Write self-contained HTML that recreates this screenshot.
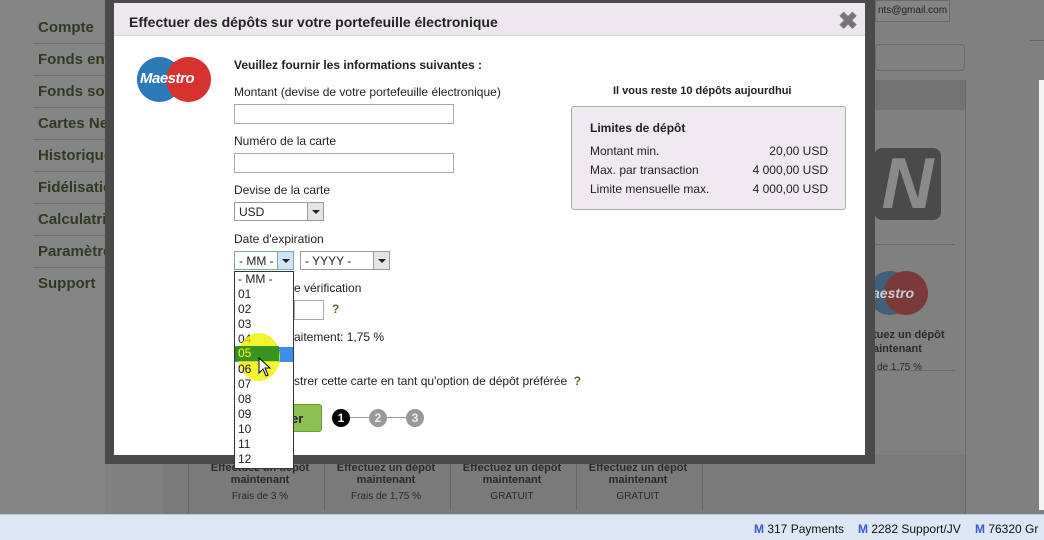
<!DOCTYPE html>
<html><head><meta charset="utf-8"><style>
*{margin:0;padding:0;box-sizing:border-box}
body{width:1044px;height:540px;overflow:hidden;background:#808080;font-family:"Liberation Sans",Arial,sans-serif;position:relative;color:#222}
.abs{position:absolute}
.nav{left:38px;font-weight:bold;font-size:15px;color:#2e3b22;}
.navl{left:33px;width:80px;height:1px;background:#6e6e6e}
.frame{left:105px;top:0;width:770px;height:464px;background:#4a4a4a;}
.modal{left:114px;top:3px;width:751px;height:452px;background:#fff}
.hdr{left:0;top:0;width:751px;height:33px;background:#ede8ee;border-bottom:1px solid #d8d4da;font-size:14px;font-weight:bold;padding:11px 15px;color:#222}
.lbl{font-size:12px;color:#222}
.inp{border:1px solid #aaa;background:#fff;height:20px}
.sel{border:1px solid #999;background:#fff;height:19px;font-size:12px;padding:2px 4px}
.arr{position:absolute;right:0;top:0;width:16px;height:17px;background:#e4e4e4;border-left:1px solid #999}
.arr:after{content:"";position:absolute;left:4px;top:7px;border:4px solid transparent;border-top:4px solid #222;border-bottom:0}
.dd{left:234px;top:271px;width:60px;height:198px;background:#fff;border:1px solid #333;font-size:12px}
.dd div{height:15px;line-height:15px;padding-left:3px}
.card{font-size:11px;color:#2a2a2a;text-align:center;font-weight:bold;width:110px}
</style></head><body>
<div class="abs" style="left:0;top:0;width:105px;height:514px;background:#858585"></div>
<div class="abs nav" style="top:19px">Compte</div><div class="abs navl" style="top:43px"></div>
<div class="abs nav" style="top:51px">Fonds ent</div><div class="abs navl" style="top:75px"></div>
<div class="abs nav" style="top:83px">Fonds sor</div><div class="abs navl" style="top:107px"></div>
<div class="abs nav" style="top:115px">Cartes Ne</div><div class="abs navl" style="top:139px"></div>
<div class="abs nav" style="top:147px">Historique</div><div class="abs navl" style="top:171px"></div>
<div class="abs nav" style="top:179px">Fidélisatio</div><div class="abs navl" style="top:203px"></div>
<div class="abs nav" style="top:211px">Calculatri</div><div class="abs navl" style="top:235px"></div>
<div class="abs nav" style="top:243px">Paramètre</div><div class="abs navl" style="top:267px"></div>
<div class="abs nav" style="top:275px">Support</div>
<div class="abs" style="left:163px;top:455px;width:802px;height:59px;background:#7a7a7a"></div>
<div class="abs" style="left:188px;top:455px;width:1px;height:59px;background:#666"></div>
<div class="abs" style="left:324px;top:462px;width:1px;height:48px;background:#666"></div>
<div class="abs" style="left:450px;top:462px;width:1px;height:48px;background:#666"></div>
<div class="abs" style="left:576px;top:462px;width:1px;height:48px;background:#666"></div>
<div class="abs" style="left:702px;top:462px;width:1px;height:48px;background:#666"></div>
<div class="abs card" style="left:205px;top:462px">Effectuez un dépôt<br>maintenant<br><span style="font-weight:normal;font-size:10px;line-height:22px">Frais de 3 %</span></div>
<div class="abs card" style="left:331px;top:462px">Effectuez un dépôt<br>maintenant<br><span style="font-weight:normal;font-size:10px;line-height:22px">Frais de 1,75 %</span></div>
<div class="abs card" style="left:457px;top:462px">Effectuez un dépôt<br>maintenant<br><span style="font-weight:normal;font-size:10px;line-height:22px">GRATUIT</span></div>
<div class="abs card" style="left:583px;top:462px">Effectuez un dépôt<br>maintenant<br><span style="font-weight:normal;font-size:10px;line-height:22px">GRATUIT</span></div>
<div class="abs" style="left:875px;top:0;width:75px;height:22px;border:1px solid #6a6a6a;font-size:10px;color:#222;padding:4px 2px;background:#848484">nts@gmail.com</div>
<div class="abs" style="left:875px;top:44px;width:90px;height:27px;border:1px solid #6a6a6a;border-radius:4px"></div>
<div class="abs" style="left:875px;top:80px;width:90px;height:30px;background:#727272"></div>
<div class="abs" style="left:965px;top:80px;width:1px;height:434px;background:#6a6a6a"></div>
<div class="abs" style="left:874px;top:148px;width:67px;height:72px;background:#4a4a4a;border-radius:8px;color:#8a8a8a;font:italic bold 72px 'Liberation Sans';line-height:72px;overflow:hidden;text-align:center">N</div>
<div class="abs" style="left:875px;top:244px;width:80px;height:1px;background:#6a6a6a"></div>
<div class="abs" style="left:868px;top:271px;width:44px;height:44px;border-radius:50%;background:#3f5f7a"></div>
<div class="abs" style="left:884px;top:271px;width:44px;height:44px;border-radius:50%;background:#7a3a3a"></div>
<div class="abs" style="left:872px;top:285px;color:#ccc;font:italic bold 14px 'Liberation Sans'">aestro</div>
<div class="abs" style="left:873px;top:328px;font-size:11px;font-weight:bold;color:#2a2a2a;line-height:14px">tuez un dépôt<br>aintenant</div>
<div class="abs" style="left:877px;top:362px;font-size:10px;color:#2a2a2a">de 1,75 %</div>
<div class="abs" style="left:875px;top:370px;width:80px;height:1px;background:#6a6a6a"></div>
<div class="abs" style="left:1030px;top:40px;width:14px;height:1px;background:#666"></div>
<div class="abs" style="left:1039px;top:80px;width:5px;height:430px;background:#f4f4f4"></div>
<div class="abs frame"></div>
<div class="abs modal">
 <div class="abs hdr">Effectuer des dépôts sur votre portefeuille électronique</div>
 <div class="abs" style="left:724px;top:4px;font-size:24px;font-weight:bold;color:#777">✖</div>
 <div class="abs" style="left:23px;top:54px;width:45px;height:45px;border-radius:50%;background:#2b79b9"></div>
 <div class="abs" style="left:52px;top:54px;width:45px;height:45px;border-radius:50%;background:#d8322e"></div>
 <div class="abs" style="left:26px;top:67px;color:#fff;font:italic bold 15px 'Liberation Sans';letter-spacing:-0.5px">Maestro</div>
 <div class="abs lbl" style="left:120px;top:55px;font-weight:bold">Veuillez fournir les informations suivantes :</div>
 <div class="abs lbl" style="left:120px;top:82px">Montant (devise de votre portefeuille électronique)</div>
 <div class="abs inp" style="left:120px;top:101px;width:220px"></div>
 <div class="abs lbl" style="left:120px;top:131px">Numéro de la carte</div>
 <div class="abs inp" style="left:120px;top:150px;width:220px"></div>
 <div class="abs lbl" style="left:120px;top:180px">Devise de la carte</div>
 <div class="abs sel" style="left:120px;top:199px;width:90px">USD<span class="arr"></span></div>
 <div class="abs lbl" style="left:120px;top:229px">Date d'expiration</div>
 <div class="abs sel" style="left:120px;top:248px;width:60px;border-color:#7a9">- MM -<span class="arr" style="background:#cfe4f7"></span></div>
 <div class="abs sel" style="left:186px;top:248px;width:90px">- YYYY -<span class="arr"></span></div>
 <div class="abs lbl" style="left:180px;top:278px">e vérification</div>
 <div class="abs inp" style="left:180px;top:297px;width:30px"></div>
 <div class="abs lbl" style="left:218px;top:299px;font-weight:bold;color:#556b2f">?</div>
 <div class="abs lbl" style="left:180px;top:327px">aitement: 1,75 %</div>
 <div class="abs lbl" style="left:180px;top:371px">strer cette carte en tant qu'option de dépôt préférée <b style="color:#556b2f">&nbsp;?</b></div>
 <div class="abs" style="left:160px;top:401px;width:48px;height:28px;background:#8cc152;border:1px solid #6a9a3a;border-radius:3px;font-size:13px;font-weight:bold;padding:6px 0 0 16px;color:#222">er</div>
 <div class="abs" style="left:236px;top:414px;width:56px;height:1px;background:#999"></div>
 <div class="abs" style="left:218px;top:406px;width:18px;height:18px;border-radius:50%;background:#000;color:#fff;font-size:12px;font-weight:bold;text-align:center;line-height:18px">1</div>
 <div class="abs" style="left:255px;top:406px;width:18px;height:18px;border-radius:50%;background:#999;color:#eee;font-size:12px;font-weight:bold;text-align:center;line-height:18px">2</div>
 <div class="abs" style="left:292px;top:406px;width:18px;height:18px;border-radius:50%;background:#999;color:#eee;font-size:12px;font-weight:bold;text-align:center;line-height:18px">3</div>
 <div class="abs" style="left:499px;top:82px;font-size:11px;font-weight:bold">Il vous reste 10 dépôts aujourdhui</div>
 <div class="abs" style="left:457px;top:103px;width:275px;height:104px;background:#efe9f0;border:1px solid #aaa;border-radius:3px;font-size:12px">
  <div class="abs" style="left:18px;top:14px;font-weight:bold">Limites de dépôt</div>
  <div class="abs" style="left:18px;top:37px">Montant min.</div><div class="abs" style="right:17px;top:37px">20,00 USD</div>
  <div class="abs" style="left:18px;top:56px">Max. par transaction</div><div class="abs" style="right:17px;top:56px">4 000,00 USD</div>
  <div class="abs" style="left:18px;top:75px">Limite mensuelle max.</div><div class="abs" style="right:17px;top:75px">4 000,00 USD</div>
 </div>
</div>
<div class="abs dd">
<div>- MM -</div><div>01</div><div>02</div><div>03</div><div>04</div><div style="background:#3d8ee8;color:#ff0">05</div><div>06</div><div>07</div><div>08</div><div>09</div><div>10</div><div>11</div><div>12</div>
</div>
<div class="abs" style="left:238px;top:333px;width:42px;height:48px;border-radius:50%;background:rgba(240,240,0,0.8)"></div>
<div class="abs" style="left:235px;top:346px;width:44px;height:15px;background:rgba(40,140,30,0.9)"></div>
<div class="abs" style="left:238px;top:346px;font-size:12px;color:#ff0">05</div>
<div class="abs" style="left:238px;top:362px;font-size:12px;color:#222">06</div>
<svg class="abs" style="left:258px;top:357px" width="14" height="20"><path d="M1 1 L1 16 L5 12 L8 19 L10 18 L7 11 L12 11 Z" fill="#fff" stroke="#000"/></svg>
<div class="abs" style="left:0;top:514px;width:1044px;height:26px;background:#dce6f4;border-top:1px solid #b8c6dc;font-size:12px;color:#111">
 <span class="abs" style="left:754px;top:7px"><b style="color:#3a5cc0">M</b> 317 Payments</span>
 <span class="abs" style="left:858px;top:7px"><b style="color:#3a5cc0">M</b> 2282 Support/JV</span>
 <span class="abs" style="left:975px;top:7px"><b style="color:#3a5cc0">M</b> 76320 Gr</span>
</div>
</body></html>
